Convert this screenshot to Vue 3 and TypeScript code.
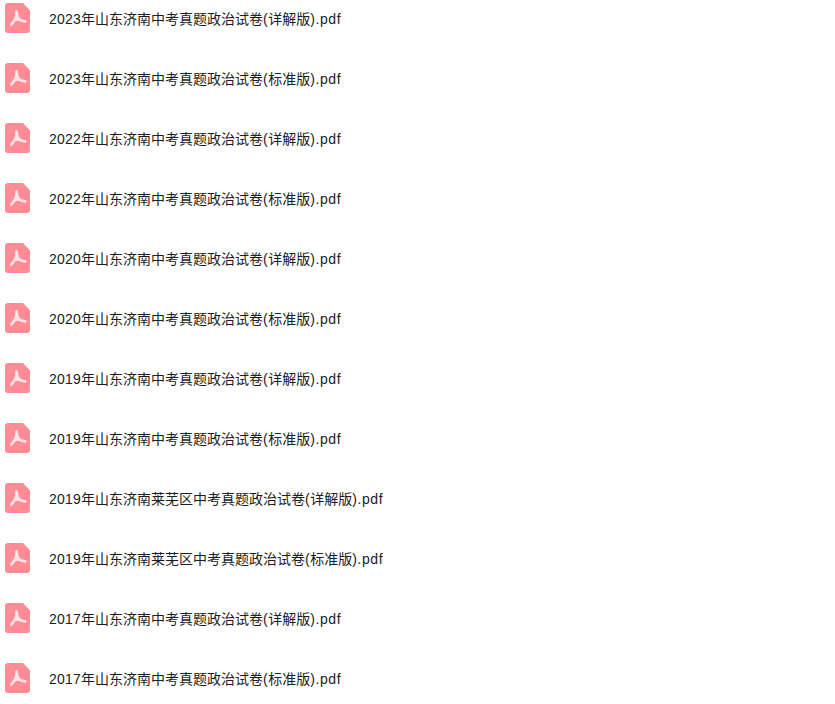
<template>
  <ul class="file-list">
    <li v-for="file in files" :key="file.name" class="file-row">
      <svg class="file-icon" width="26" height="30" viewBox="0 0 26 30">
        <path
          d="M3 0h15l7 7.500v19.500a3 3 0 0 1-3 3h-19a3 3 0 0 1-3-3v-24a3 3 0 0 1 3-3z"
          fill="#ff8b95"
        />
        <path
          d="M11.500 8.500c.2 3.500 1 6.200 3 8.200 1.800 1.200 3.800 1.700 5.800 1.700M11.500 8.500c.4 4.500-1.200 9-5.300 13M9.800 17.200c1.500-.6 3-.8 4.700-.5"
          fill="none"
          stroke="#ffe4e7"
          stroke-width="2.600"
          stroke-linecap="round"
          stroke-linejoin="round"
        />
      </svg>
      <span class="file-name"><span class="year">{{ file.year }}</span>年{{ file.place }}中考真题政治试卷<span class="paren">(</span>{{ file.edition }}<span class="ext">).pdf</span></span>
    </li>
  </ul>
</template>

<script setup lang="ts">
interface PaperFile {
  name: string
  year: number
  place: string
  edition: string
}

const paper = (year: number, place: string, edition: string): PaperFile => ({
  name: `${year}-${place}-${edition}`,
  year,
  place,
  edition
})

const files: PaperFile[] = [
  paper(2023, '山东济南', '详解版'),
  paper(2023, '山东济南', '标准版'),
  paper(2022, '山东济南', '详解版'),
  paper(2022, '山东济南', '标准版'),
  paper(2020, '山东济南', '详解版'),
  paper(2020, '山东济南', '标准版'),
  paper(2019, '山东济南', '详解版'),
  paper(2019, '山东济南', '标准版'),
  paper(2019, '山东济南莱芜区', '详解版'),
  paper(2019, '山东济南莱芜区', '标准版'),
  paper(2017, '山东济南', '详解版'),
  paper(2017, '山东济南', '标准版')
]
</script>

<style>
html,
body {
  background: #fff;
  overflow: hidden;
}
</style>

<style scoped>
.file-list {
  list-style: none;
  margin: 0;
  padding: 0 0 0 5px;
  display: flex;
  flex-direction: column;
  gap: 22px;
}

.file-row {
  display: flex;
  align-items: center;
  height: 38px;
  gap: 18px;
}

.file-icon {
  flex: none;
  margin-top: -2px;
}

.file-name {
  font-family: "Liberation Sans", "Noto Sans CJK SC", sans-serif;
  font-size: 14px;
  line-height: 20px;
  color: #1a1d21;
}

.year {
  letter-spacing: 0.21px;
}

.paren {
  letter-spacing: 0.5px;
}

.ext {
  letter-spacing: 0.6px;
}
</style>
